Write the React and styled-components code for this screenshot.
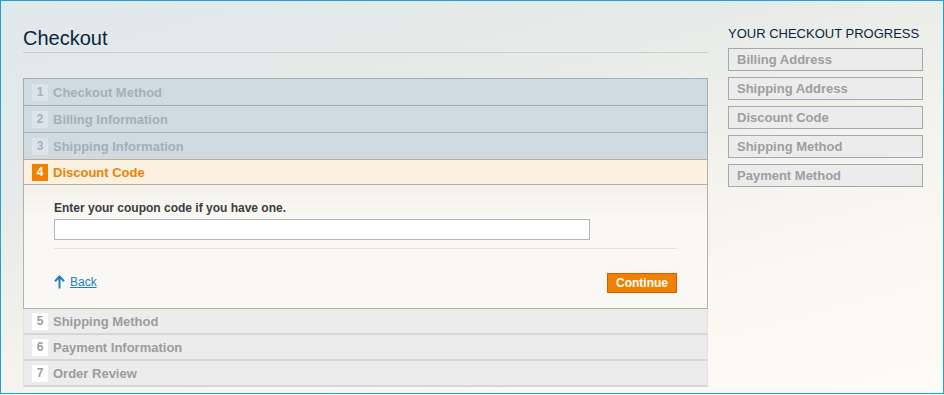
import React from 'react'
import styled, { createGlobalStyle, css } from 'styled-components'

const Global = createGlobalStyle`
  html, body { margin:0; padding:0; background:#fff; }
  * { box-sizing:border-box; }
  body { font-family: Arial, "Liberation Sans", sans-serif; }
`

const Frame = styled.div`
  width:944px;
  height:394px;
  border:1px solid #1ca3d8;
  background:linear-gradient(165deg, #e1e8eb 0%, #e6eae8 30%, #f3f2ec 55%, #fbf8f2 75%, #fdfbf7 100%);
  display:grid;
  grid-template-columns:685px 195px;
  column-gap:20px;
  padding:24px 0 0 22px;
  overflow:hidden;
`

const Main = styled.div`
  display:flex;
  flex-direction:column;
`

const Heading = styled.h1`
  margin:0;
  font-size:20px;
  line-height:24px;
  font-weight:normal;
  color:#0a263c;
  padding:1px 0 2px;
  border-bottom:1px solid #cdcdcd;
  margin-bottom:25px;
`

const Steps = styled.ol`
  list-style:none;
  margin:0;
  padding:0;
`

const headerTone = {
  done: css`
    background:#d0dbe1;
    border:1px solid #a3afb6;
    border-bottom:none;
    color:#a4afb6;
  `,
  active: css`
    background:#faf1e1;
    border:1px solid #b9ae9f;
    color:#f08100;
  `,
  todo: css`
    background:#ececec;
    border-left:1px solid #e2e2e2;
    border-right:1px solid #e2e2e2;
    border-bottom:2px solid #d6d6d6;
    color:#9c9c9c;
  `,
}

const StepHeader = styled.div`
  display:flex;
  align-items:center;
  height:${p => (p.$tone === 'done' ? 27 : 26)}px;
  padding-left:8px;
  font-size:13px;
  font-weight:bold;
  ${p => headerTone[p.$tone]}
`

const badgeTone = {
  done: css`background:#dce4e9; color:#a5b0b7;`,
  active: css`background:#f08100; color:#fff;`,
  todo: css`background:#fff; color:#9c9c9c;`,
}

const Badge = styled.span`
  width:16px;
  height:17px;
  display:inline-flex;
  align-items:center;
  justify-content:center;
  font-size:12px;
  font-weight:bold;
  margin-right:5px;
  ${p => badgeTone[p.$tone]}
`

const StepBody = styled.div`
  background:linear-gradient(180deg, #f3f0ea 0%, #f9f8f4 25%, #faf8f5 100%);
  border:1px solid #b6b0a6;
  border-top:none;
  padding:16px 30px 15px;
  display:flex;
  flex-direction:column;
`

const Label = styled.label`
  font-size:12px;
  font-weight:bold;
  color:#3d3d3d;
  line-height:15px;
  margin-bottom:3px;
`

const Input = styled.input`
  width:536px;
  height:21px;
  border:1px solid #b6b6b6;
  background:#fff;
  padding:0 4px;
  font-size:12px;
  outline:none;
`

const Rule = styled.div`
  height:1px;
  background:#e3e2e0;
  margin:8px 0 24px;
`

const Actions = styled.div`
  display:flex;
  align-items:center;
  justify-content:space-between;
`

const BackLink = styled.a`
  display:flex;
  align-items:center;
  gap:5px;
  font-size:12px;
  color:#1f7fc6;
  text-decoration:underline;
  margin-top:-3px;
  cursor:pointer;
`

const Button = styled.button`
  width:70px;
  height:20px;
  background:#f08100;
  border:1px solid #de5600;
  color:#fff;
  font-family: Arial, "Liberation Sans", sans-serif;
  font-size:12px;
  font-weight:bold;
  padding:0;
  cursor:pointer;
`

const Sidebar = styled.aside`
  display:flex;
  flex-direction:column;
  gap:6px;
`

const SideTitle = styled.h2`
  margin:1px 0 0;
  font-size:13px;
  line-height:16px;
  font-weight:normal;
  color:#0a263c;
  text-transform:uppercase;
  white-space:nowrap;
`

const ProgressItem = styled.div`
  height:23px;
  border:1px solid #a2a9ae;
  background:#ececec;
  padding-left:8px;
  display:flex;
  align-items:center;
  font-size:13px;
  font-weight:bold;
  color:#9e9e9e;
`

const steps = [
  { n: 1, title: 'Checkout Method', tone: 'done' },
  { n: 2, title: 'Billing Information', tone: 'done' },
  { n: 3, title: 'Shipping Information', tone: 'done' },
  { n: 4, title: 'Discount Code', tone: 'active' },
  { n: 5, title: 'Shipping Method', tone: 'todo' },
  { n: 6, title: 'Payment Information', tone: 'todo' },
  { n: 7, title: 'Order Review', tone: 'todo' },
]

const progress = ['Billing Address', 'Shipping Address', 'Discount Code', 'Shipping Method', 'Payment Method']

const UpArrow = () => (
  <svg width="11" height="14" viewBox="0 0 11 14">
    <path d="M5.5 13.5V2 M1 6.2 L5.5 1.5 L10 6.2" fill="none" stroke="#1f7fc6" strokeWidth="2" />
  </svg>
)

const App = () => {
  return (
    <Frame>
      <Global />
      <Main>
        <Heading>Checkout</Heading>
        <Steps>
          {steps.map(s => (
            <li key={s.n}>
              <StepHeader $tone={s.tone}>
                <Badge $tone={s.tone}>{s.n}</Badge>
                {s.title}
              </StepHeader>
              {s.tone === 'active' && (
                <StepBody>
                  <Label>Enter your coupon code if you have one.</Label>
                  <Input type="text" />
                  <Rule />
                  <Actions>
                    <BackLink><UpArrow />Back</BackLink>
                    <Button>Continue</Button>
                  </Actions>
                </StepBody>
              )}
            </li>
          ))}
        </Steps>
      </Main>
      <Sidebar>
        <SideTitle>Your Checkout Progress</SideTitle>
        {progress.map(p => (
          <ProgressItem key={p}>{p}</ProgressItem>
        ))}
      </Sidebar>
    </Frame>
  )
}

export default App
